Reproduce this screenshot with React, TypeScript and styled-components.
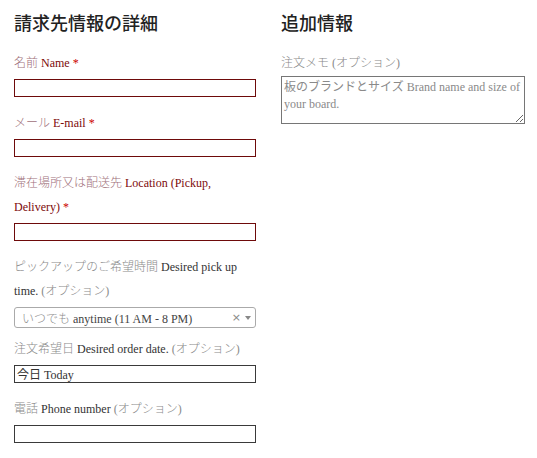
import React from "react";
import styled, { createGlobalStyle } from "styled-components";

const Global = createGlobalStyle`
  html, body { margin: 0; padding: 0; background: #fff; }
  body { font-family: "Liberation Serif", "Times New Roman", serif; }
  * { box-sizing: border-box; }
`;

const cjk = `"Liberation Serif", "Times New Roman", "Noto Sans CJK JP", serif`;

const Page = styled.div`
  display: grid;
  grid-template-columns: 242px 244px;
  column-gap: 25px;
  padding: 12px 0 0 14px;
`;

const Column = styled.section`
  display: flex;
  flex-direction: column;
`;

const Heading = styled.h3`
  margin: 0 0 15px;
  font-family: ${cjk};
  font-size: 18px;
  line-height: 24px;
  font-weight: 500;
  color: #222;
`;

const Field = styled.div<{ $gap?: number }>`
  display: flex;
  flex-direction: column;
  margin-bottom: ${(p) => p.$gap ?? 14}px;
`;

const Label = styled.label<{ $required?: boolean; $tight?: boolean }>`
  font-size: 12px;
  line-height: 24px;
  color: ${(p) => (p.$required ? "#7d0a0a" : "#333")};
  margin-bottom: ${(p) => (p.$tight ? 1 : 4)}px;
`;

const Jp = styled.span<{ $required?: boolean }>`
  font-family: ${cjk};
  font-weight: 300;
  color: ${(p) => (p.$required ? "#a0707a" : "#8a8a8a")};
`;

const Optional = styled.span`
  font-family: ${cjk};
  font-weight: 300;
  color: #8a8a8a;
`;

const Star = styled.abbr`
  color: #c00;
  text-decoration: none;
  margin-left: 3px;
`;

const TextInput = styled.input<{ $required?: boolean }>`
  display: block;
  width: 100%;
  height: 18px;
  margin: 0;
  padding: 0 2px;
  border: 1px solid ${(p) => (p.$required ? "#6e0a0a" : "#3a3a3a")};
  border-radius: 0;
  font-family: ${cjk};
  font-size: 12px;
  color: #333;
  background: #fff;
  outline: none;
`;

const SelectBox = styled.div`
  display: flex;
  align-items: center;
  height: 21px;
  border: 1px solid #aaa;
  border-radius: 3px;
  padding: 0 4px 0 7px;
  font-size: 12px;
  color: #444;
  background: #fff;
`;

const SelectValue = styled.span`
  flex: 1;
  white-space: nowrap;
  overflow: hidden;
`;

const Clear = styled.span`
  font-family: "DejaVu Sans", sans-serif;
  font-size: 11px;
  color: #888;
  margin-right: 4px;
`;

const Arrow = styled.span`
  width: 0;
  height: 0;
  border-left: 3px solid transparent;
  border-right: 3px solid transparent;
  border-top: 4px solid #888;
`;

const TextArea = styled.textarea`
  display: block;
  width: 244px;
  height: 48px;
  margin: 0;
  padding: 2px 2px;
  border: 1px solid #767676;
  font-family: ${cjk};
  font-size: 12px;
  line-height: 17px;
  color: #333;
  resize: vertical;
  outline: none;
  &::placeholder { color: #8a8a8a; }
`;

export default function App() {
  return (
    <>
      <Global />
      <Page>
        <Column>
          <Heading>請求先情報の詳細</Heading>
          <Field>
            <Label $required>
              <Jp $required>名前</Jp> Name<Star>*</Star>
            </Label>
            <TextInput $required />
          </Field>
          <Field>
            <Label $required>
              <Jp $required>メール</Jp> E-mail<Star>*</Star>
            </Label>
            <TextInput $required />
          </Field>
          <Field>
            <Label $required>
              <Jp $required>滞在場所又は配送先</Jp> Location (Pickup, Delivery)<Star>*</Star>
            </Label>
            <TextInput $required />
          </Field>
          <Field $gap={9}>
            <Label>
              <Jp>ピックアップのご希望時間</Jp> Desired pick up time. <Optional>(オプション)</Optional>
            </Label>
            <SelectBox>
              <SelectValue>
                <Jp>いつでも</Jp> anytime (11 AM - 8 PM)
              </SelectValue>
              <Clear>×</Clear>
              <Arrow />
            </SelectBox>
          </Field>
          <Field>
            <Label>
              <Jp>注文希望日</Jp> Desired order date. <Optional>(オプション)</Optional>
            </Label>
            <TextInput defaultValue="今日 Today" />
          </Field>
          <Field>
            <Label>
              <Jp>電話</Jp> Phone number <Optional>(オプション)</Optional>
            </Label>
            <TextInput />
          </Field>
        </Column>
        <Column>
          <Heading>追加情報</Heading>
          <Field>
            <Label $tight>
              <Jp>注文メモ</Jp> <Optional>(オプション)</Optional>
            </Label>
            <TextArea placeholder="板のブランドとサイズ Brand name and size of your board." />
          </Field>
        </Column>
      </Page>
    </>
  );
}
